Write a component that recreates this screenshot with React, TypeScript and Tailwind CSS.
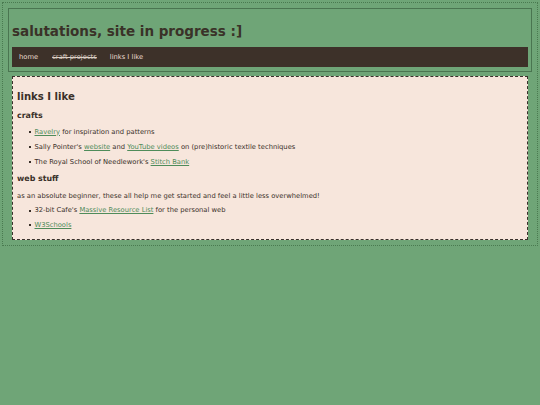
export default function App() {
  const link = 'text-[#4f8c5a] underline'
  const li =
    "relative before:absolute before:left-[-5.5px] before:top-[3.5px] before:h-[2px] before:w-[2px] before:bg-[#3a3029] before:content-['']"

  return (
    <div
      className="min-h-[405px] bg-[#6fa577] p-[2px] text-[6.75px] text-[#3a3029]"
      style={{ fontFamily: '"DejaVu Sans", Verdana, sans-serif' }}
    >
      <div className="border border-dotted border-[#4a7a50] p-[5px]">
        {/* header */}
        <header className="border border-[#4a7550] px-[3px] pt-[3px] pb-[4px]">
          <h1 className="mt-[11px] mb-[8px] text-[13.5px] leading-[16px] font-bold text-[#3a3228]">
            salutations, site in progress :]
          </h1>
          <nav className="flex h-[20px] items-center bg-[#3d3129] text-[#eadcd0]">
            <a className="px-[7px]">home</a>
            <a className="px-[7px] line-through text-[#ddd0c6]">craft projects</a>
            <a className="px-[6px]">links I like</a>
          </nav>
        </header>

        {/* content */}
        <main className="mx-[4px] mt-[4px] border border-dashed border-[#3a312b] bg-[#f7e6dc] px-[4px] pt-[14px] pb-[9px]">
          <h2 className="text-[10.1px] leading-[12px] font-bold">links I like</h2>

          <h3 className="mt-[8px] text-[7.9px] leading-[10px] font-bold">crafts</h3>
          <ul className="mt-[6.5px] pl-[17.5px] leading-[9px]">
            <li className={`${li} mb-[6px]`}>
              <a className={link}>Ravelry</a> for inspiration and patterns
            </li>
            <li className={`${li} mb-[6px]`}>
              Sally Pointer's <a className={link}>website</a> and{' '}
              <a className={link}>YouTube videos</a> on (pre)historic textile techniques
            </li>
            <li className={li}>
              The Royal School of Needlework's <a className={link}>Stitch Bank</a>
            </li>
          </ul>

          <h3 className="mt-[7.5px] text-[7.9px] leading-[10px] font-bold">web stuff</h3>
          <p className="mt-[7.5px] leading-[9px]">
            as an absolute beginner, these all help me get started and feel a little less overwhelmed!
          </p>
          <ul className="mt-[5.5px] pl-[17.5px] leading-[9px]">
            <li className={`${li} mb-[5.5px]`}>
              32-bit Cafe's <a className={link}>Massive Resource List</a> for the personal web
            </li>
            <li className={li}>
              <a className={link}>W3Schools</a>
            </li>
          </ul>
        </main>
      </div>
    </div>
  )
}
